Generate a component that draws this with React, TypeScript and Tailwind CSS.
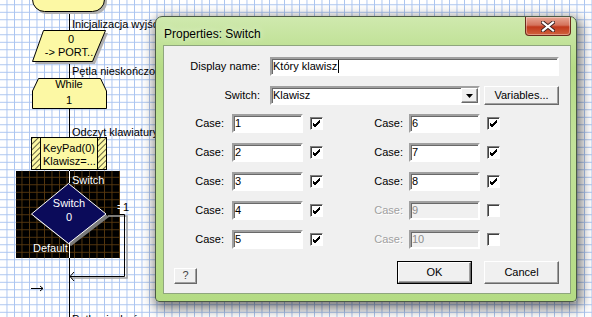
import React from "react";

const font = "font-['Liberation_Sans',Arial,sans-serif]";
const sunken =
  "border-2 border-t-[#a0a0a0] border-l-[#a0a0a0] border-b-white border-r-white shadow-[inset_1px_1px_0_#696969]";
const raised =
  "border border-t-white border-l-white border-b-[#696969] border-r-[#696969] shadow-[inset_-1px_-1px_0_#a0a0a0] bg-[#f0f0f0]";

const Check = ({ on }: { on: boolean }) => (
  <div className="w-[13px] h-[13px] bg-white border border-t-[#808080] border-l-[#808080] border-b-white border-r-white shadow-[inset_1px_1px_0_#404040] flex items-center justify-center">
    {on && (
      <svg width="9" height="9" viewBox="0 0 9 9">
        <path d="M1 4 L3 6 L8 1 M1 5 L3 7 L8 2 M1 6 L3 8 L8 3" stroke="#000" strokeWidth="1" fill="none" />
      </svg>
    )}
  </div>
);

const CaseRow = ({ v, on, enabled, labelW, gap }: { v: string; on: boolean; enabled: boolean; labelW: string; gap: string }) => (
  <div className="flex items-center h-[19px]">
    <div
      className={`${labelW} text-right ${enabled ? "text-black" : "text-[#a0a0a0] [text-shadow:1px_1px_0_#fff]"}`}
    >
      Case:
    </div>
    <div
      className={`${gap} w-[71px] h-[19px] ${sunken} ${enabled ? "bg-white text-black" : "bg-[#f0f0f0] text-[#8d8d8d]"} pl-[1px] leading-[15px]`}
    >
      {v}
    </div>
    <div className="ml-[7px]">
      <Check on={on} />
    </div>
  </div>
);

const Flowchart = () => (
  <svg width="592" height="317" className="absolute left-0 top-0" fontFamily="Liberation Sans, Arial, sans-serif" fontSize="11">
    <defs>
      <pattern id="grid" x="6.5" y="4.3" width="7.5" height="7.5" patternUnits="userSpaceOnUse">
        <path d="M0 0H7.5M0 0V7.5" stroke="#aac4f0" strokeWidth="1" shapeRendering="crispEdges" />
      </pattern>
      <pattern id="bgrid" x="6.5" y="4.3" width="7.5" height="7.5" patternUnits="userSpaceOnUse">
        <path d="M0 0H7.5M0 0V7.5" stroke="#55370f" strokeWidth="1" shapeRendering="crispEdges" />
      </pattern>
      <pattern id="hatch" width="4" height="4" patternUnits="userSpaceOnUse" patternTransform="rotate(45)">
        <rect width="4" height="4" fill="#fcf8a4" />
        <line x1="0" y1="0" x2="0" y2="4" stroke="#000" strokeWidth="1.2" />
      </pattern>
    </defs>
    <rect width="592" height="317" fill="#fff" />
    <rect width="592" height="317" fill="url(#grid)" />

    {/* main line */}
    <line x1="69.5" y1="0" x2="69.5" y2="317" stroke="#000" />

    {/* start */}
    <rect x="35" y="-18" width="72" height="32" rx="12" fill="#b0b0b0" />
    <rect x="32.5" y="-20.5" width="72" height="32" rx="12" fill="#fcf8a4" stroke="#000" />
    <text x="69" y="-1" textAnchor="middle">Start</text>

    <text x="72" y="28">Inicjalizacja wyjść</text>
    <polygon points="45,33 108,33 95,64 35,64" fill="#b0b0b0" />
    <polygon points="43.5,30.5 105.5,30.5 92.5,61.5 32.5,61.5" fill="#fcf8a4" stroke="#000" />
    <text x="71" y="43" textAnchor="middle">0</text>
    <text x="69" y="56" textAnchor="middle">-&gt; PORT..</text>

    <text x="72" y="75">Pętla nieskończona</text>
    <polygon points="38.5,78.5 100.5,78.5 106.5,91 106.5,108.5 32.5,108.5 32.5,91" fill="#fcf8a4" stroke="#000" />
    <text x="69" y="88" textAnchor="middle">While</text>
    <text x="69" y="104" textAnchor="middle">1</text>

    <text x="72" y="136">Odczyt klawiatury</text>
    <rect x="31.5" y="137.5" width="75" height="32" fill="#fcf8a4" stroke="#000" />
    <rect x="32" y="138" width="8" height="31" fill="url(#hatch)" />
    <rect x="98" y="138" width="8" height="31" fill="url(#hatch)" />
    <line x1="40.5" y1="137.5" x2="40.5" y2="169.5" stroke="#000" />
    <line x1="97.5" y1="137.5" x2="97.5" y2="169.5" stroke="#000" />
    <text x="43" y="152">KeyPad(0)</text>
    <text x="43" y="165">Klawisz=...</text>

    {/* selected switch */}
    <rect x="16" y="171" width="104" height="87" fill="#000" />
    <rect x="16" y="171" width="104" height="87" fill="url(#bgrid)" />
    <line x1="69.5" y1="171" x2="69.5" y2="183" stroke="#fff" />
    <text x="72" y="184" fill="#fff">Switch</text>
    <polygon points="71,186 109,217 71,246 34,217" fill="#7a7a7a" />
    <polygon points="68.5,183.5 106,214 68.5,243.5 31.5,214" fill="#0b0b5a" stroke="#fff" />
    <text x="69" y="207" textAnchor="middle" fill="#fff">Switch</text>
    <text x="69" y="221" textAnchor="middle" fill="#fff">0</text>
    <text x="33" y="252" fill="#fff">Default</text>
    <line x1="69.5" y1="243" x2="69.5" y2="258" stroke="#fff" />
    <text x="117" y="211" fill="#fff">=</text>
    <text x="123" y="211">1</text>

    {/* case 1 branch */}
    <polyline points="108,216 127,216 127,278 71,278" fill="none" stroke="#a0a0a0" strokeWidth="1.5" />
    <polyline points="106,214.5 124.5,214.5 124.5,276.5 69.5,276.5" fill="none" stroke="#000" />
    <polyline points="74,272 70,276.5 74,281" fill="none" stroke="#000" />

    {/* stray arrow */}
    <line x1="31" y1="288.5" x2="43" y2="288.5" stroke="#000" />
    <polyline points="40,286 43,288.5 40,291" fill="none" stroke="#000" />

    <text x="72" y="323">Pętla nieskończona</text>
  </svg>
);

export default function App() {
  return (
    <div className={`relative w-[592px] h-[317px] overflow-hidden bg-white ${font} text-[11px]`}>
      <Flowchart />

      {/* Properties dialog */}
      <div className="absolute left-[155px] top-[16px] w-[422px] h-[286px] flex flex-col rounded-t-[7px] rounded-b-[4px] border border-[#4b5a44] bg-[linear-gradient(180deg,#cfe9ae_0%,#b6dc86_18%,#c2e29a_45%,#b4db84_100%)] shadow-[2px_4px_12px_3px_rgba(0,0,0,0.5)]">
        <div className="h-[28px] flex items-start justify-between pl-[8px] pr-[5px]">
          <div className="mt-[8px] text-[12px] text-black [text-shadow:0_0_6px_#eef8e0]">Properties: Switch</div>
          <div className="w-[46px] h-[19px] rounded-b-[4px] border border-t-0 border-[#6b2a1c] bg-[linear-gradient(180deg,#e9a794_0%,#d4735c_45%,#c1391c_55%,#d0623d_100%)] flex items-center justify-center shadow-[inset_0_0_0_1px_rgba(255,255,255,0.35)]">
            <svg width="14" height="11" viewBox="0 0 14 11">
              <path d="M2 1.5 L12 9.5 M12 1.5 L2 9.5" stroke="#3a2020" strokeWidth="4" strokeLinecap="square" />
              <path d="M2 1.5 L12 9.5 M12 1.5 L2 9.5" stroke="#fff" strokeWidth="2.2" strokeLinecap="square" />
            </svg>
          </div>
        </div>

        <div className="ml-[7px] mr-[5px] mb-[7px] flex-1 bg-[#f0f0f0] border border-[#8fa67e] flex flex-col">
          <div className="mt-[11px] flex items-center h-[19px]">
            <div className="w-[96px] text-right">Display name:</div>
            <div className={`ml-[10px] w-[289px] h-[19px] ${sunken} bg-white pl-[1px] leading-[15px] flex items-center`}>
              <span>Który klawisz</span>
              <span className="ml-[1px] w-px h-[13px] bg-black" />
            </div>
          </div>

          <div className="mt-[10px] flex items-center h-[19px]">
            <div className="w-[96px] text-right">Switch:</div>
            <div className={`ml-[10px] w-[210px] h-[19px] ${sunken} bg-white pl-[1px] leading-[15px] flex justify-between`}>
              <span>Klawisz</span>
              <div className={`w-[17px] h-[15px] ${raised} flex items-center justify-center`}>
                <svg width="7" height="4" viewBox="0 0 7 4">
                  <path d="M0 0 H7 L3.5 4 Z" fill="#000" />
                </svg>
              </div>
            </div>
            <div className={`ml-[4px] w-[75px] h-[19px] ${raised} flex items-center justify-center`}>Variables...</div>
          </div>

          <div className="mt-[9px] flex">
            <div className="w-[160px] flex flex-col gap-[10px]">
              {["1", "2", "3", "4", "5"].map((v) => (
                <CaseRow key={v} v={v} on enabled labelW="w-[60px]" gap="ml-[8px]" />
              ))}
            </div>
            <div className="flex flex-col gap-[10px]">
              {[
                ["6", true],
                ["7", true],
                ["8", true],
                ["9", false],
                ["10", false],
              ].map(([v, e]) => (
                <CaseRow key={v as string} v={v as string} on={e as boolean} enabled={e as boolean} labelW="w-[79px]" gap="ml-[6px]" />
              ))}
            </div>
          </div>

          <div className="mt-[12px] flex items-start">
            <div className={`ml-[10px] mt-[7px] w-[23px] h-[16px] ${raised} flex justify-center leading-[12px] text-[#444]`}>?</div>
            <div className="ml-[200px] w-[75px] h-[23px] border border-black">
              <div className={`w-full h-full ${raised} flex items-center justify-center`}>OK</div>
            </div>
            <div className={`ml-[12px] w-[75px] h-[23px] ${raised} flex items-center justify-center`}>Cancel</div>
          </div>
        </div>
      </div>
    </div>
  );
}
